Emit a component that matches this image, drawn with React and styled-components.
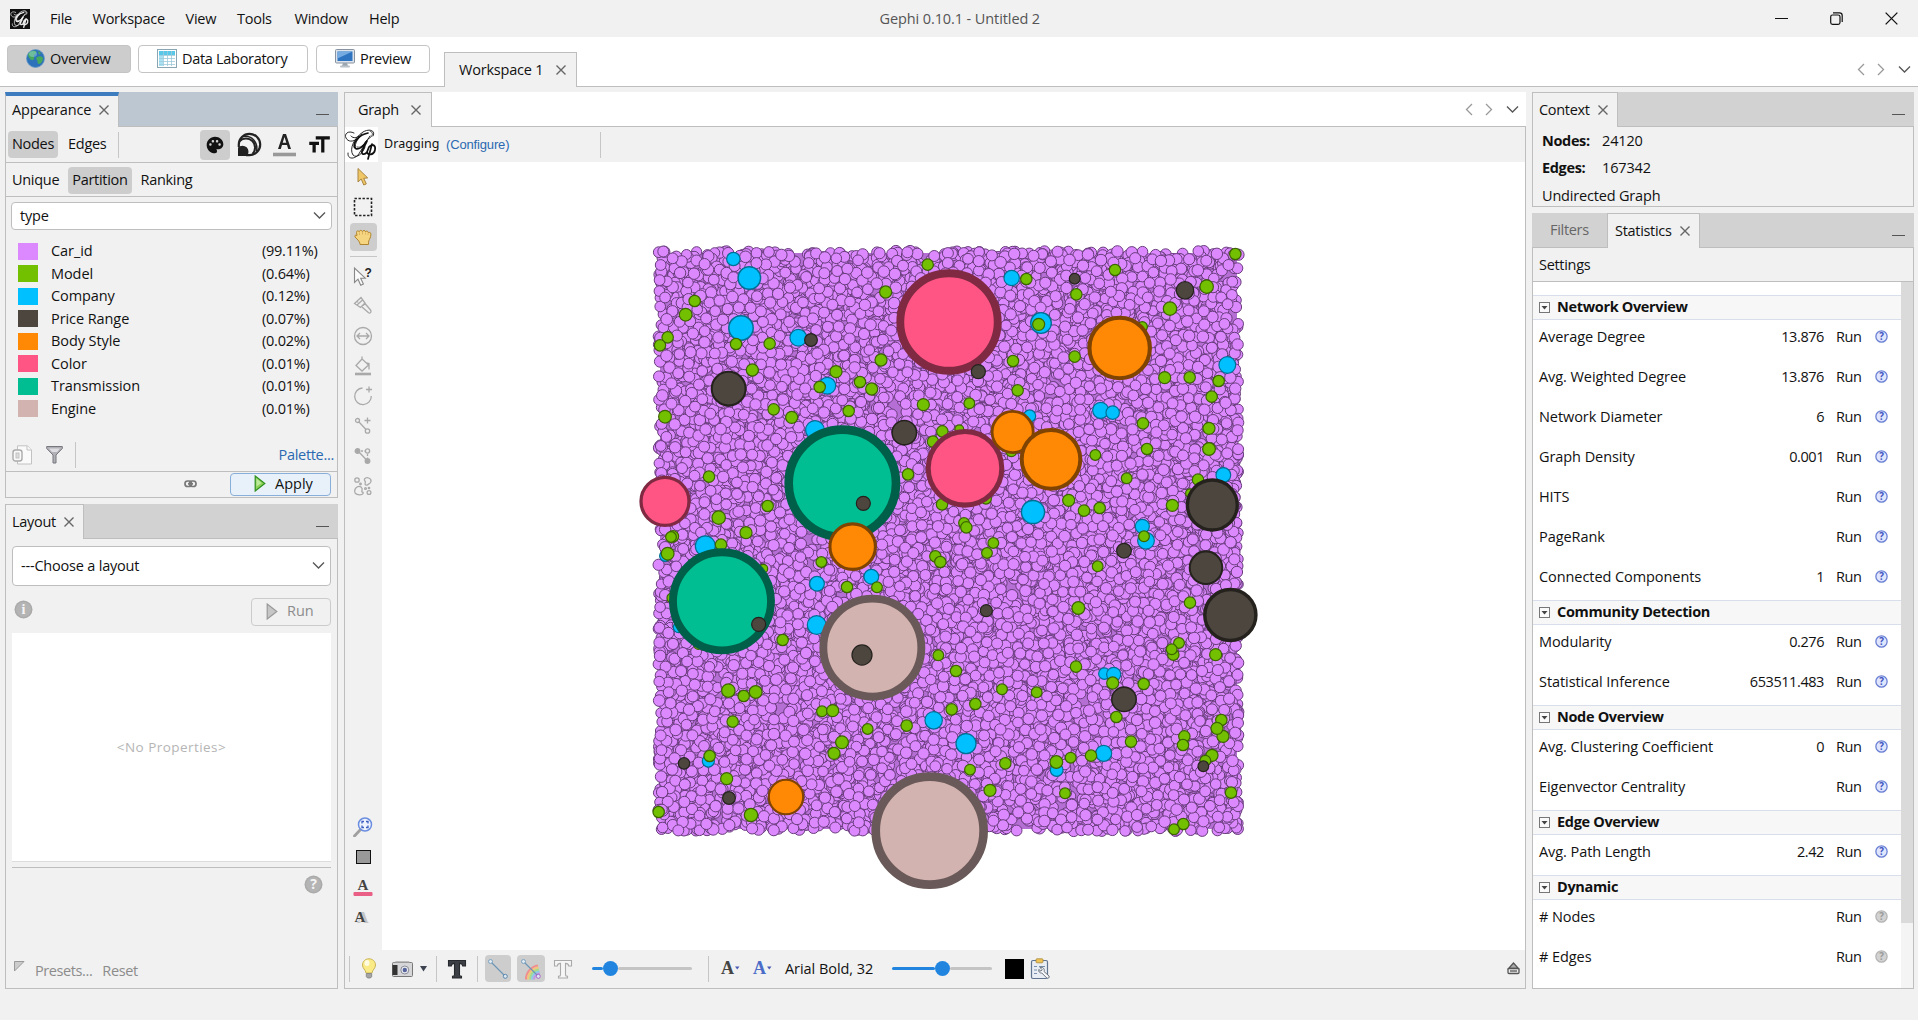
import React from "react";
import styled, { createGlobalStyle, css } from "styled-components";
import { MdPalette, MdFormatSize } from "react-icons/md";

const UI = `"Open Sans", "Noto Sans", sans-serif`;
const LINE = "#bebebe";
const BG = "#f1f1f1";

const Global = createGlobalStyle`
  * { box-sizing: border-box; }
  html, body { margin: 0; padding: 0; background: ${BG}; overflow: hidden; }
  body { font-family: ${UI}; font-size: 14.5px; letter-spacing: -0.3px; color: #111; line-height: 20px; }
  svg { display: block; flex: none; }
`;

const Window = styled.div`
  width: 1918px; height: 1020px; display: flex; flex-direction: column; background: ${BG}; overflow: hidden;
`;
const TitleBar = styled.header`
  height: 37px; display: grid; grid-template-columns: 1fr auto 1fr; align-items: center; flex: none;
`;
const Menu = styled.nav`
  display: flex; align-items: center; padding-left: 10px; height: 36px;
`;
const MenuItem = styled.span`
  width: ${(p) => p.$w}px; white-space: nowrap; letter-spacing: -0.25px;
`;
const AppIcon = styled.div`
  width: 20px; height: 20px; margin-right: 20px; background: #111;
`;
const WindowTitle = styled.div`
  color: #555; font-size: 14.5px; letter-spacing: -0.1px; white-space: nowrap; width: 159px;
`;
const WindowButtons = styled.div`
  display: flex; justify-content: flex-end; gap: 42px; align-items: center; padding-right: 20px;
`;
const TopStrip = styled.div`
  height: 50px; background: #fff; border-bottom: 1px solid ${LINE}; display: flex; padding-left: 7px; flex: none;
`;
const Perspective = styled.button`
  height: 28px; width: ${(p) => p.$w}px; margin: 8px ${(p) => p.$gap}px 0 0; padding: 0 0 1px ${(p) => p.$pad}px;
  display: flex; align-items: center; gap: 5px; border: 1px solid #c4c4c4; border-radius: 4px;
  background: ${(p) => (p.$on ? "#cdcdcd" : "#fff")}; font: inherit; letter-spacing: inherit; color: inherit; white-space: nowrap;
`;
const WorkspaceTab = styled.div`
  height: 35px; width: 133px; margin: 15px 0 0; border: 1px solid ${LINE}; border-bottom: 0; background: ${BG};
  display: flex; align-items: center; justify-content: space-between; padding: 0 10px 0 14px; white-space: nowrap; letter-spacing: -0.2px;
`;
const Arrows = styled.div`
  margin-left: auto; display: flex; align-items: center; gap: 11px; padding: ${(p) => p.$pad || "0"};
`;
const ArrowPair = styled.span`
  display: flex; gap: 6px;
`;
const Body = styled.main`
  flex: none; height: 897px; margin: 5px 5px 0 5px; display: flex; gap: 6px;
`;
const Column = styled.div`
  width: ${(p) => p.$w}px; display: flex; flex-direction: column; gap: 6px; flex: none;
`;
const Panel = styled.section`
  height: ${(p) => p.$h}px; display: flex; flex-direction: column; border: 1px solid ${LINE}; border-top: 0; flex: none; background: ${BG};
`;
const Tabs = styled.div`
  height: 35px; margin: 0 -1px; display: flex; flex: none; background: ${(p) => p.$bg || "#d2d2d2"};
  box-shadow: inset 0 -1px ${LINE};
`;
const Tab = styled.div`
  width: ${(p) => p.$w}px; display: flex; align-items: center; gap: ${(p) => p.$gap || 8}px; padding: 0 0 1px ${(p) => p.$pad || 7}px;
  white-space: nowrap; color: ${(p) => (p.$off ? "#666" : "#111")};
  ${(p) => !p.$off && css`
    background: ${BG}; border: 1px solid ${LINE}; border-bottom: 0;
  `}
  ${(p) => p.$focus && css`border-top: 4px solid #3d7dbf; padding-bottom: 3px; letter-spacing: -0.2px;`}
`;
const Minimise = styled.i`
  width: 13px; height: 1px; background: #555; margin: 22px 9px 0 auto;
`;
const ToolRow = styled.div`
  height: ${(p) => p.$h}px; display: flex; align-items: center; border-bottom: 1px solid ${LINE}; flex: none; padding: ${(p) => p.$pad};
  gap: ${(p) => p.$gap || 0}px;
`;
const Toggle = styled.span`
  height: 27px; padding: 0 4px; margin: ${(p) => p.$m || 0}; line-height: 26px; border-radius: 4px; white-space: nowrap;
  background: ${(p) => (p.$on ? "#cdcdcd" : "transparent")};
`;
const IconToggle = styled.span`
  width: ${(p) => p.$w || 30}px; height: ${(p) => p.$h || 30}px; border-radius: 4px; display: flex; align-items: center; justify-content: center;
  background: ${(p) => (p.$on ? "#cdcdcd" : "transparent")}; flex: none; margin: ${(p) => p.$m || 0};
`;
const VRule = styled.i`
  width: 1px; height: ${(p) => p.$h || 26}px; background: #c6c6c6; margin: ${(p) => p.$m || 0}; flex: none;
`;
const Push = styled.div`flex: 1;`;
const Select = styled.div`
  height: ${(p) => p.$h}px; margin: ${(p) => p.$m}; border: 1px solid ${LINE}; border-radius: 4px; background: #fff; flex: none;
  display: flex; align-items: center; justify-content: space-between; padding: 0 5px 1px 8px; letter-spacing: -0.2px;
`;
const Legend = styled.ul`
  list-style: none; margin: 10px 0 0; padding: 0; height: 198px; flex: none;
`;
const LegendRow = styled.li`
  height: 22.5px; display: grid; grid-template-columns: 20px 224px 1fr; align-items: center; padding-left: 12px; letter-spacing: -0.08px;
  & > b { width: 20px; height: 17px; background: ${(p) => p.$c}; }
  & > span { padding-left: 13px; line-height: 20px; }
  & > em { font-style: normal; letter-spacing: -0.25px; line-height: 20px; }
`;
const Button = styled.button`
  height: ${(p) => p.$h}px; width: ${(p) => p.$w}px; display: flex; align-items: center; gap: 9px; padding: 0 0 1px ${(p) => p.$pad}px;
  border: 1px solid ${(p) => (p.$main ? "#87afda" : "#cbcbcb")}; border-radius: 4px; background: ${(p) => (p.$main ? "#e8f1fa" : BG)};
  color: ${(p) => (p.$main ? "#111" : "#8c8c8c")}; font: inherit; letter-spacing: 0;
`;
const LinkText = styled.a`
  color: #2a69b2; white-space: nowrap; ${(p) => p.$arial && css`font: 13px "Liberation Sans", Arial, sans-serif; letter-spacing: -0.15px;`}
`;
const ApplyRow = styled.div`
  height: 27px; display: flex; align-items: center; justify-content: flex-end; gap: 33px; padding: 0 6px 1px 0;
`;
const RunRow = styled.div`
  height: 47px; display: flex; align-items: center; justify-content: space-between; padding: 4px 6px 0 8px; flex: none;
`;
const BadgeSlot = styled.div`margin-bottom: 4px;`;
const Properties = styled.div`
  height: 229px; margin: 0 6px; background: #fff; display: flex; align-items: center; justify-content: center; flex: none;
  color: #b5b5b5; font-size: 13.5px; letter-spacing: 0.45px; border-bottom: 1px solid #ddd;
`;
const HelpRow = styled.div`
  margin: 5px 6px 0; border-top: 1px solid ${LINE}; height: 94px; display: flex; justify-content: flex-end; padding: 7px 8px; flex: none;
`;
const Presets = styled.div`
  display: flex; gap: 10px; color: #8c8c8c; padding-left: 8px; letter-spacing: -0.4px;
`;
const Center = styled.section`
  width: 1182px; display: flex; flex-direction: column; border: 1px solid ${LINE}; border-top: 0; flex: none;
`;
const GraphBar = styled.div`
  height: 35px; display: flex; align-items: center; flex: none;
`;
const LogoBox = styled.div`
  width: 33px; height: 35px; background: #fff;
`;
const ModeText = styled.span`
  font: 12.5px "Noto Sans", sans-serif; letter-spacing: 0.05px; width: 57px; margin: -3px 5px 0 6px; white-space: nowrap;
`;
const ConfigureSlot = styled.span`width: 154px; display: flex;`;
const Workspace = styled.div`
  height: 788px; display: flex; flex: none;
`;
const SideTools = styled.div`
  width: 37px; display: flex; flex-direction: column; align-items: center; padding: 0 1px 20px 0; flex: none;
`;
const HRule = styled.i`
  width: 27px; height: 1px; background: #c6c6c6; margin: 4px 0 4px;
`;
const Canvas = styled.div`flex: 1; background: #fff;`;
const BottomBar = styled.div`
  height: 38px; display: flex; align-items: center; padding-left: 4px; padding-bottom: 1px;
`;
const Item = styled.div`
  width: ${(p) => p.$w}px; display: flex; align-items: center; justify-content: center; flex: none;
`;
const FontName = styled.span`
  width: 113px; padding-left: 6px; white-space: nowrap; letter-spacing: -0.05px;
`;
const Track = styled.div`
  width: 100px; height: 16px; display: flex; align-items: center; flex: none;
  & > i { height: 3px; border-radius: 2px; background: #c4c4c4; flex: 1; }
  & > i:first-child { background: #2185e0; flex: none; width: ${(p) => p.$v - 7}px; }
  & > b { width: 15px; height: 15px; border-radius: 50%; background: #2185e0; }
`;
const ColorChip = styled.div`width: 19px; height: 20px; background: #000;`;
const ContextBody = styled.dl`
  margin: 0; padding: 0 0 0 9px; display: grid; grid-template-columns: 60px 1fr; grid-auto-rows: 27.5px; align-items: center; letter-spacing: -0.15px;
  & dt { font-weight: 700; letter-spacing: -0.35px; } & dd { margin: 0; } & dt:last-child { font-weight: 400; grid-column: 1 / 3; letter-spacing: -0.18px; }
`;
const Scroll = styled.div`
  flex: 1; display: flex; background: #fff; overflow: hidden;
`;
const List = styled.div`flex: 1; padding-top: 13px;`;
const ScrollTrack = styled.div`
  width: 12px; background: #f4f4f4; & > i { display: block; height: 641px; background: #dadada; }
`;
const SectionHead = styled.h3`
  margin: 0; height: 25px; border: solid #d8deea; border-width: 1px 0 1px; background: #f7f7f8; display: flex; align-items: center; gap: 7px;
  padding: 0 0 1px 6px; font: inherit; font-weight: 700; letter-spacing: -0.33px;
`;
const StatRow = styled.div`
  height: 40px; display: grid; grid-template-columns: 1fr auto 37px 40px; align-items: center; padding: 0 0 7px 6px; white-space: nowrap;
  letter-spacing: -0.07px;
  & > span:nth-child(2) { letter-spacing: -0.42px; }
  & > span:nth-child(3) { padding-left: 12px; letter-spacing: -0.4px; }
  & > svg { margin-left: 14px; }
`;

const Cross = ({ s = 10, c = "#666", w = 1.4 }) => (
  <svg width={s} height={s} viewBox="0 0 10 10" stroke={c} strokeWidth={w} fill="none"><path d="M.5.5l9 9M9.5.5l-9 9" /></svg>
);
const Chevron = ({ dir = "down", c = "#555" }) => {
  const d = { down: "M1 3.5l5.5 5.5L12 3.5", left: "M9 1L3.5 6.5 9 12", right: "M4 1l5.5 5.5L4 12" }[dir];
  return <svg width="13" height="13" viewBox="0 0 13 13" stroke={c} strokeWidth="1.3" fill="none"><path d={d} /></svg>;
};
const NavArrows = ({ pad }) => (
  <Arrows $pad={pad}><ArrowPair><Chevron dir="left" c="#999" /><Chevron dir="right" c="#999" /></ArrowPair><Chevron /></Arrows>
);

const Logo = ({ size, h, color, sw = 1.3 }) => (
  <svg width={size} height={h} viewBox="0 0 33 35" fill="none" stroke={color} strokeLinecap="round">
    <g strokeWidth={sw * 0.7}>
      <path d="M9 6C3 3-1 7 1 11s7 4 11 1" />
      <path d="M28 9c3-5-3-8-10-4C9 11 4 22 8 28c4 4 10-2 12-8" />
      <path d="M3 26c-1 7 8 7 12-1 4-6 6-10 10-16" />
      <path d="M16 9c-5 4-7 10-5 13M6 9c2 3 7 2 11-2" />
    </g>
    <g strokeWidth={sw * 1.3}>
      <path d="M23 6C13 8 7 17 10 21c3 3 9-2 11-6" />
      <path d="M22 14l-5 10c-1 4 3 4 5 1l2-5c3-4 7-2 6 3s-7 6-8 2M27 17l-4 15" />
    </g>
    <path d="M25 4c4 1 3 6-2 8M12 20c4 1 6-1 10-7" strokeWidth={sw * 0.6} />
  </svg>
);
const Globe = () => (
  <svg width="19" height="19" viewBox="0 0 19 19">
    <circle cx="9.5" cy="9.5" r="9" fill="#2c72ba" stroke="#6b9bc8" strokeWidth=".8" />
    <path d="M2 5c2-3 5-4 8-3 1 2-1 3-2 4s1 2 0 4-3 1-4 0-2-3-2-5zM11 8c2-1 5-1 6 1 0 3-2 6-4 6s-1-3-2-4-1-2 0-3zM12 2l3 2-2 2z" fill="#45a85c" />
    <ellipse cx="7" cy="5" rx="4" ry="3" fill="#9fd8e8" opacity=".45" />
  </svg>
);
const TableIcon = () => (
  <svg width="20" height="19" viewBox="0 0 20 19">
    <rect x=".5" y=".5" width="19" height="18" fill="#fff" stroke="#8aa5b4" />
    <rect x="2" y="2" width="16" height="4" fill="#58c7e8" /><rect x="2" y="6" width="4" height="11" fill="#a9e2f3" />
    <path d="M2 6.500h16M2 9.500h16M2 12.500h16M2 15.500h16M6.500 2v15M10.500 2v15M14.500 2v15" stroke="#9cc9da" strokeWidth=".8" />
  </svg>
);
const Monitor = () => (
  <svg width="20" height="19" viewBox="0 0 20 19">
    <rect x=".5" y=".5" width="19" height="13.500" rx="1" fill="#dde3ea" stroke="#8793a0" />
    <rect x="2.500" y="2.500" width="15" height="9.500" fill="#2f74c0" /><path d="M2.500 2.500h15l-15 7z" fill="#76abe2" />
    <path d="M8 14h4l1 3H7z" fill="#9aa4ae" /><rect x="5" y="16.500" width="10" height="2" rx="1" fill="#b8c0c8" />
  </svg>
);
const RankSize = () => (
  <svg width="25" height="25" viewBox="0 0 25 25" fill="none" stroke="#222">
    <path d="M1.800 15V12.500A10.700 10.700 0 1 1 12.500 23.200H9" strokeWidth="2.200" />
    <path d="M2.500 9.200A8.600 8.600 0 0 1 15.500 22" strokeWidth="2.100" />
    <path d="M6 4.500c8-1.500 15.500 5 13.500 15" strokeWidth="1.500" />
    <path d="M1 15.500a5.500 5.500 0 1 1 8.800 8.500H1z" fill="#222" stroke="none" />
  </svg>
);
const FontColor = () => (
  <svg width="23" height="24" viewBox="0 0 23 24">
    <path d="M5 16L10 1h3l5 15h-2.800l-1.200-4H9l-1.200 4zM9.700 9.800h3.600L11.500 4z" fill="#222" />
    <path d="M0 21.500h23" stroke="#999" strokeWidth="3.600" />
  </svg>
);
const Play = ({ on }) => (
  <svg width="12" height="17" viewBox="0 0 12 17">
    <path d="M1.200 1v15l9.600-7.500z" fill={on ? "#8ed25a" : "#c6c6c6"} stroke={on ? "#2f8f1e" : "#9a9a9a"} strokeWidth="1.200" />
    {on && <path d="M2.500 3.500v8l5-3.500z" fill="#d2f2b8" opacity=".7" />}
  </svg>
);
const Badge = ({ t, bold }) => (
  <svg width="19" height="19" viewBox="0 0 19 19">
    <circle cx="9.500" cy="9.500" r="9" fill="#aaa" /><circle cx="9.500" cy="9.500" r="7.500" fill="#b4b4b4" />
    <text x="9.500" y="14.400" textAnchor="middle" fontFamily={bold ? "Liberation Serif" : "Open Sans"} fontWeight="700" fontSize="14" fill="#f4f4f4" letterSpacing="0">{t}</text>
  </svg>
);
const SmallHelp = ({ off }) => (
  <svg width="13" height="13" viewBox="0 0 12 12">
    <circle cx="6" cy="6" r="5.200" fill={off ? "#d2d2d2" : "#dfe5fc"} stroke={off ? "#b5b5b5" : "#6b80d4"} strokeWidth="1.200" />
    <text x="6" y="9.300" textAnchor="middle" fontFamily="Open Sans" fontWeight="700" fontSize="9" fill={off ? "#999" : "#3d55c0"} letterSpacing="0">?</text>
  </svg>
);
const Caret = () => (
  <svg width="11" height="11" viewBox="0 0 11 11"><rect x=".5" y=".5" width="10" height="10" fill="#fafafa" stroke="#777" /><path d="M2.500 4h6l-3 3.500z" fill="#444" /></svg>
);
const Letter = ({ fill = "#444", bar, shadow, arrow }) => (
  <svg width="22" height="22" viewBox="0 0 22 22" fontFamily="Liberation Serif" fontWeight="700" fontSize={bar ? 15 : 16} letterSpacing="0">
    {shadow && <text x="5" y="16.500" fill="#c4c4c4">A</text>}
    <text x={bar ? 5.500 : shadow ? 2.500 : 3} y={bar ? 13 : 15.500} fill={fill} fontSize={arrow ? 18 : shadow ? 15 : undefined}>A</text>
    {bar && <rect x="1.500" y="15" width="19" height="4" rx="1" fill="#ea5f86" />}
    {arrow && <path d="M17 8.500h4.500l-2.250 3z" fill="#4a5bb5" />}
  </svg>
);
const BigT = ({ outline }) => (
  <svg width="20" height="20" viewBox="0 0 20 20">
    <path d="M1.500 1.500h17v5.500h-2.800c-.2-2-.9-2.600-3.200-2.600v11.600c0 1 .5 1.300 2 1.300v1.700h-9v-1.700c1.500 0 2-.3 2-1.300V4.400C5.200 4.400 4.500 5 4.300 7H1.500z"
      fill={outline ? "#f6f6f6" : "#3c3f45"} stroke={outline ? "#aaa" : "#26292e"} strokeWidth="1.100" />
  </svg>
);

const svg20 = { width: 20, height: 20, viewBox: "0 0 20 20", fill: "none", stroke: "#a9a9a9", strokeWidth: 1.3 };
const Pointer = () => (
  <svg {...svg20}><path d="M5 1.500v13.500l3.200-3 2.600 6 2.500-1.100-2.600-5.600 4-.4z" fill="#efc766" stroke="#a98540" strokeWidth="1" /></svg>
);
const Marquee = () => <svg {...svg20}><rect x="1.500" y="1.500" width="17" height="17" stroke="#222" strokeWidth="1.600" strokeDasharray="2.400 1.600" /></svg>;
const Hand = () => (
  <svg {...svg20}><path d="M7 17.500c0-2-1-3-2-4.500L2 10c-.5-1.500.5-2.500 2-1.500L3.500 5.500c-.1-1.800 1.700-2.200 2.700-.7.300-1.800 2.700-2 3.200-.2.500-1.700 2.800-1.500 3.200.3.600-1.500 2.600-1 2.700.8 1-.9 2.700-.2 2.600 1.500 0 3-1.400 5-2.200 6.800l-.2 3.500z" fill="#f6d580" stroke="#b1852f" strokeWidth="1" />
    <path d="M6.500 8V5.500M9.500 7.500V5M12.500 7.500V5.500M15 8V6.500" stroke="#d5aa55" strokeWidth=".8" /></svg>
);
const Query = () => (
  <svg {...svg20}><path d="M1.500 2v14.500l3.500-3.300 2.700 6 2.700-1.300-2.700-5.700h4.600z" fill="#fafafa" stroke="#888" strokeWidth="1.100" />
    <text x="11.500" y="11" fontSize="12" fontWeight="700" fontFamily="Liberation Sans" fill="#222" stroke="none" letterSpacing="0">?</text></svg>
);
const Brush = () => <svg {...svg20}><path d="M1.500 7.500L8 1.500l4 5.500-4.500 4.500zM3.500 9.500l6-5.500M5 6.500l-1-1.500M10 9.500l2-2 5.500 6.500c1.500 2-.5 4-2.200 2.600L9 11" /></svg>;
const Resize = () => <svg {...svg20}><circle cx="10" cy="10" r="8.500" /><path d="M4.500 10h11M7 7l-3 3 3 3M13 7l3 3-3 3" /></svg>;
const Bucket = () => <svg {...svg20}><path d="M9 3L3 9.500l6 5.500 6.500-6L9 3V.5M12.500 6.500l3.500 1v6" /><path d="M2 18h16" strokeWidth="2.600" /></svg>;
const AddNode = () => <svg {...svg20}><path d="M9.500 2a8.300 8.300 0 1 0 8.800 8M16 .5v6M13 3.500h6" /></svg>;
const AddEdge = () => <svg {...svg20}><circle cx="4.500" cy="4.500" r="2" /><circle cx="14.500" cy="15" r="2.200" /><path d="M6 6l7 7.500M14.500 1.500v6M11.500 4.500h6" /></svg>;
const Path = () => (
  <svg {...svg20}><circle cx="4.500" cy="5" r="2.300" fill="#a9a9a9" /><circle cx="14.500" cy="15" r="2.300" fill="#a9a9a9" /><circle cx="14.500" cy="5" r="2.100" />
    <path d="M5 5l9.500 10" /><path d="M8 5h4M14.500 8v4" strokeDasharray="2 1.500" /></svg>
);
const Heat = () => (
  <svg {...svg20}><circle cx="4" cy="4" r="2.200" /><path d="M11.500 3c2-2.500 7-1 6.500 2.500-.4 2.500-3 2-3.500 3.500-1.500.5-3-.5-2.300-2C13.500 5 10.500 5 11.500 3zM4 11c3-2 6 1 5 3.500s2 1 1 3-6 1.500-7.500 0-1-5 1.500-6.500z" />
    <circle cx="16" cy="16.500" r="1.900" /><circle cx="7.500" cy="8" r=".8" /><circle cx="12.500" cy="12.500" r=".9" /><circle cx="16" cy="12" r=".7" /></svg>
);
const Magnifier = () => (
  <svg width="20" height="20" viewBox="0 0 20 20" fill="none"><path d="M8 12l-6.500 7" stroke="#a0a0a0" strokeWidth="2.800" strokeLinecap="round" />
    <circle cx="12" cy="7.500" r="6.500" fill="#eef3fe" stroke="#6b8ee0" strokeWidth="1.500" />
    <path d="M9 6.500v-2h2M13 4.500h2v2M15 8.500v2h-2M11 10.500H9v-2" stroke="#3c5fc0" strokeWidth="1.300" /></svg>
);
const Bulb = () => (
  <svg width="16" height="21" viewBox="0 0 16 21"><path d="M8 .8c-4 0-6.500 3-6.500 6.200 0 3.500 3 4.500 3.500 8h6c.5-3.500 3.500-4.500 3.500-8C14.500 3.800 12 .8 8 .8z" fill="#fbeb86" stroke="#c9b458" />
    <ellipse cx="6" cy="5" rx="2.500" ry="3" fill="#fffbe0" /><path d="M5.300 15.500h5.400v3L9.500 20h-3l-1.200-1.500z" fill="#a4a4a4" stroke="#777" strokeWidth=".7" /></svg>
);
const Camera = () => (
  <svg width="21" height="18" viewBox="0 0 21 18"><rect x=".5" y="2.500" width="20" height="14" rx="1" fill="#d6d6d8" stroke="#777" /><rect x=".5" y="5" width="5" height="10" fill="#333" />
    <path d="M2 2.500h16l-1-1.500H4z" fill="#bbb" /><circle cx="12.800" cy="10" r="4" fill="#e8eaf0" stroke="#8a8d98" /><circle cx="12.800" cy="10" r="2.200" fill="#56629a" /></svg>
);
const EdgeLine = ({ rainbow }) => (
  <svg width="22" height="22" viewBox="0 0 22 22" fill="none">
    {rainbow && ["#ef8f8f", "#f3c77a", "#a5dc8c", "#8bcbe6", "#c298e4"].map((c, i) => (
      <path key={c} d={`M${6 + i * 2} 21.500a${14 - i * 2} ${14 - i * 2} 0 0 1 ${12 - i * 1.500} ${-14 + i * 2}`} stroke={c} strokeWidth="2" />
    ))}
    <path d="M4 4l14 14" stroke="#6b94b6" strokeWidth="1.100" />
    <circle cx="3.500" cy="3.500" r="2" fill="#dfe9f1" stroke="#7fa2bf" /><circle cx="18.300" cy="18.300" r="2" fill="#dfe9f1" stroke={rainbow ? "#a569c8" : "#5b87ac"} />
  </svg>
);
const Clipboard = () => (
  <svg width="21" height="22" viewBox="0 0 21 22"><rect x="1.500" y="2.500" width="16" height="18" rx="1.500" fill="#e9eef5" stroke="#5e748f" strokeWidth="1.200" />
    <rect x="6" y=".8" width="7" height="4" rx="1" fill="#f0c556" stroke="#a8873a" strokeWidth=".8" /><path d="M4 8.500h3M4 12h3M4 15.500h3M9 8.500h6" stroke="#7890ab" />
    <path d="M10 9.500c3-.8 5 1.500 4 4l5 4.500c1 1.500-1 3-2.200 2l-5-5c-2 .4-3.600-1.600-3-3.500l2.200 1.700 1.300-1.400z" fill="#f8f9fb" stroke="#5e6670" strokeWidth=".9" /></svg>
);
const Eject = () => (
  <svg width="13" height="13" viewBox="0 0 13 13" fill="none" stroke="#555" strokeWidth="1.300"><path d="M6.500 1L1.500 6.500h10z" fill="#aaa" /><rect x="1" y="6.500" width="11" height="5" rx="1" fill="#eee" /><path d="M3 9h7" /></svg>
);
const Sheet = () => (
  <svg width="21" height="20" viewBox="0 0 21 20" fill="#fafafa" stroke="#c2c2c2"><path d="M5.500.8h10L19.500 5v14h-14z" /><path d="M15 .8V5h4.500" /><rect x="1" y="5" width="9" height="11" rx="2.500" stroke="#aaa" strokeWidth="1.400" /><rect x="4" y="8" width="3" height="5" fill="#ddd" /></svg>
);
const Funnel = () => (
  <svg width="17" height="19" viewBox="0 0 17 19"><path d="M.7 1.500h15.600v2L10 10v8H7v-8L.7 3.500z" fill="#b0b0b6" stroke="#77777e" /><path d="M3 3.500h11l-3 3.500H6z" fill="#dedee2" /></svg>
);
const Link = () => (
  <svg width="13" height="8" viewBox="0 0 13 8" fill="none" stroke="#777" strokeWidth="1.700"><rect x="1" y="1" width="6.500" height="5.500" rx="2.600" /><rect x="5.500" y="1" width="6.500" height="5.500" rx="2.600" /><path d="M4 3.800h5" /></svg>
);

/* Graph nodes: fill and border per partition value */
const STYLE = {
  company: ["#00c0ff", "#006f94"],
  model: ["#73c000", "#3c6400"],
  color: ["#ff5584", "#7f2a42"],
  transmission: ["#00be92", "#005f49"],
  engine: ["#d3b3b0", "#695958"],
  body: ["#ff8805", "#7f4402"],
  price: ["#4c463e", "#25221e"],
};
/* Each tile lists its nodes as x, y, r in thirds of a pixel from the tile's origin */
const TILES = [
  { x: 640, y: 230,
    company: [[280,87,21],[328,144,35],[303,294,38],[475,323,26],[562,467,26],[525,600,29],[196,948,31],[75,978,17]],
    model: [[164,213,18],[137,254,20],[83,322,18],[60,346,18],[288,342,18],[389,341,18],[337,420,19],[588,425,19],[539,471,18],[660,456,18],[695,477,19],[723,390,19],[737,186,19],[863,104,18],[401,538,18],[455,562,19],[626,543,18],[850,524,19],[907,604,18],[879,635,18],[75,560,20],[207,740,18],[804,733,18],[906,823,18],[383,828,18],[236,863,21],[318,908,19],[99,919,18],[93,921,17],[83,971,20],[243,944,18],[544,996,17],[886,979,18],[901,996,18],[958,598,14],[370,1016,14]],
    price: [[513,330,20],[266,476,53],[793,608,38],[670,820,22]],
    color: [[927,276,157],[75,814,76]],
    transmission: [[607,760,173]],
    body: [[638,950,72]] },
  { x: 960, y: 230,
    company: [[155,144,24],[243,279,32],[802,405,26],[422,541,25],[458,548,21],[209,558,19],[219,846,36],[790,735,23],[547,889,22],[558,932,26]],
    model: [[199,147,18],[465,120,18],[349,193,18],[740,170,21],[826,72,18],[630,236,21],[236,283,19],[547,290,16],[159,393,18],[344,380,18],[173,481,18],[28,520,17],[614,443,19],[689,442,18],[776,453,18],[755,500,18],[549,580,18],[747,595,19],[747,657,20],[561,657,18],[406,675,17],[500,745,17],[714,749,18],[690,790,14],[326,811,19],[372,842,18],[419,834,18],[637,826,19],[12,879,17],[19,892,18],[100,939,17],[81,969,17],[552,919,17],[413,1009,17],[154,664,17],[78,806,17]],
    price: [[344,146,17],[675,181,27],[55,425,22],[757,825,79],[492,962,23],[738,1013,51]],
    color: [[15,715,117]],
    body: [[479,354,96],[158,606,65],[273,688,93]] },
  { x: 640, y: 560,
    company: [[531,71,23],[694,50,23],[530,195,29],[881,481,27],[205,603,19],[116,202,17]],
    model: [[621,81,18],[711,82,17],[428,240,18],[895,286,17],[948,333,18],[265,392,21],[311,408,18],[347,396,20],[546,454,17],[578,452,19],[278,485,18],[683,507,17],[800,497,18],[935,448,18],[606,547,20],[582,580,19],[209,588,18],[260,656,19],[56,756,18],[333,765,21],[96,114,16],[175,255,14]],
    price: [[356,193,22],[666,285,31],[132,610,18],[267,714,20]],
    transmission: [[246,124,158]],
    engine: [[697,263,158],[869,812,174]],
    body: [[438,711,54]] },
  { x: 960, y: 560,
    company: [[18,551,31],[433,341,18],[461,343,22],[431,580,25],[290,630,20]],
    model: [[355,144,20],[690,128,18],[657,249,17],[640,284,18],[635,268,17],[767,284,19],[348,320,18],[458,369,19],[551,372,18],[469,471,18],[126,388,17],[230,397,17],[46,432,18],[784,480,18],[789,529,19],[771,505,19],[673,529,18],[669,555,18],[513,545,18],[756,586,19],[736,602,17],[289,606,20],[332,593,17],[393,587,18],[136,610,18],[30,629,17],[90,691,19],[315,700,17],[813,698,18],[670,792,18],[642,808,17]],
    price: [[79,152,19],[811,165,81],[492,418,38],[730,619,17]] },
];
const LAYERS = ["company", "model", "transmission", "engine", "color", "body", "price"];

const random = (seed) => () => {
  seed = (seed + 0x6d2b79f5) | 0;
  let t = Math.imul(seed ^ (seed >>> 15), 1 | seed);
  t = (t + Math.imul(t ^ (t >>> 7), 61 | t)) ^ t;
  return ((t ^ (t >>> 14)) >>> 0) / 4294967296;
};
const buildField = () => {
  const rnd = random(24120);
  const x0 = 658.5, y0 = 251, w = 580, h = 580;
  const pts = [];
  for (let i = 0; i < 10000; i++) pts.push([x0 + rnd() * w, y0 + rnd() * h, 5 + rnd() * 0.7]);
  const cell = 11, cols = 60, grid = new Map();
  for (let i = 0; i < 9000; i++) {
    const x = rnd() * w, y = rnd() * h, gx = Math.floor(x / cell), gy = Math.floor(y / cell);
    const min = 35 + rnd() * 80;
    let ok = true;
    for (let a = -1; a <= 1 && ok; a++)
      for (let b = -1; b <= 1 && ok; b++)
        for (const q of grid.get((gy + b) * cols + gx + a) || [])
          if ((q[0] - x) ** 2 + (q[1] - y) ** 2 < min) { ok = false; break; }
    if (!ok) continue;
    const k = gy * cols + gx;
    grid.set(k, [...(grid.get(k) || []), [x, y]]);
    pts.push([x0 + x, y0 + y, 5.300 + rnd() * 0.5]);
  }
  return pts;
};
const FIELD = buildField();

const ringWidth = (r) => {
  if (r > 140) return r * 0.05;
  if (r > 60) return r * 0.043;
  return Math.max(1.2, r * 0.04);
};

const Graph = () => (
  <svg width="1143" height="788" viewBox="382 162 1143 788">
    <rect x="660" y="253" width="577" height="576" fill="#b56fd4" />
    <g fill="#dc89ff" stroke="#683c7b" strokeWidth="1">
      {FIELD.map((p, i) => <circle key={i} cx={p[0].toFixed(1)} cy={p[1].toFixed(1)} r={p[2].toFixed(1)} />)}
    </g>
    {LAYERS.map((kind) => (
      <g key={kind} fill={STYLE[kind][0]} stroke={STYLE[kind][1]}>
        {TILES.flatMap((t) => (t[kind] || []).map(([x, y, r]) => {
          const sw = ringWidth(r);
          return <circle key={`${t.x}-${t.y}-${x}-${y}`} cx={t.x + x / 3} cy={t.y + y / 3} r={r / 3 - sw / 2 + 0.3} strokeWidth={sw} />;
        }))}
      </g>
    ))}
  </svg>
);

const LEGEND = [
  ["Car_id", "99.11", "#dc89ff"], ["Model", "0.64", "#73c000"], ["Company", "0.12", "#00c0ff"], ["Price Range", "0.07", "#4c463e"],
  ["Body Style", "0.02", "#ff8805"], ["Color", "0.01", "#ff5584"], ["Transmission", "0.01", "#00be92"], ["Engine", "0.01", "#d3b3b0"],
];
const STATS = [
  ["Network Overview", [["Average Degree", "13.876"], ["Avg. Weighted Degree", "13.876"], ["Network Diameter", "6"], ["Graph Density", "0.001"], ["HITS", ""], ["PageRank", ""], ["Connected Components", "1"]]],
  ["Community Detection", [["Modularity", "0.276"], ["Statistical Inference", "653511.483"]]],
  ["Node Overview", [["Avg. Clustering Coefficient", "0"], ["Eigenvector Centrality", ""]]],
  ["Edge Overview", [["Avg. Path Length", "2.42"]]],
  ["Dynamic", [["# Nodes", ""], ["# Edges", ""]]],
];

const Appearance = () => (
  <Panel $h={406}>
    <Tabs $bg="#bcc7d1"><Tab $w={114} $focus $pad={6}>Appearance <Cross /></Tab><Minimise /></Tabs>
    <ToolRow $h={36} $pad="0 3px 0 2px">
      <Toggle $on>Nodes</Toggle><Toggle $m="0 0 0 6px">Edges</Toggle><VRule $m="0 0 0 8px" />
      <Push />
      <IconToggle $on><MdPalette size={20} color="#111" /></IconToggle>
      <IconToggle $m="0 0 0 4px"><RankSize /></IconToggle>
      <IconToggle $m="0 0 0 5px"><FontColor /></IconToggle>
      <IconToggle $m="0 0 0 5px"><MdFormatSize size={26} color="#111" /></IconToggle>
    </ToolRow>
    <ToolRow $h={34} $pad="1px 2px 0 2px" $gap={5}><Toggle>Unique</Toggle><Toggle $on>Partition</Toggle><Toggle>Ranking</Toggle></ToolRow>
    <Select $h={28} $m="5px 5px 0">type <Chevron /></Select>
    <Legend>
      {LEGEND.map(([n, v, c]) => <LegendRow key={n} $c={c}><b /><span>{n}</span><em>({v}%)</em></LegendRow>)}
    </Legend>
    <ToolRow $h={34} $pad="0 3px 0 6px"><Sheet /><Item $w={42}><Funnel /></Item><VRule /><Push /><LinkText>Palette...</LinkText></ToolRow>
    <ApplyRow><Link /><Button $main $h={23} $w={101} $pad={23}><Play on />Apply</Button></ApplyRow>
  </Panel>
);

const LayoutPanel = () => (
  <Panel $h={485}>
    <Tabs><Tab $w={79} $pad={6}>Layout <Cross /></Tab><Minimise /></Tabs>
    <Select $h={40} $m="7px 6px 0">---Choose a layout <Chevron /></Select>
    <RunRow><BadgeSlot><Badge t="i" bold /></BadgeSlot><Button $h={28} $w={80} $pad={14}><Play />Run</Button></RunRow>
    <Properties>&lt;No Properties&gt;</Properties>
    <HelpRow><Badge t="?" /></HelpRow>
    <Presets><svg width="11" height="11" viewBox="0 0 11 11"><path d="M.5.5h9.500l-9.500 9.500z" fill="#ccc" stroke="#999" /></svg><span>Presets...</span><span>Reset</span></Presets>
  </Panel>
);

const Statistics = () => (
  <Panel $h={776}>
    <Tabs><Tab $w={75} $off $pad={18}>Filters</Tab><Tab $w={93} $pad={7}>Statistics <Cross /></Tab><Minimise /></Tabs>
    <ToolRow $h={34} $pad="0 6px">Settings</ToolRow>
    <Scroll>
      <List>
        {STATS.map(([title, rows]) => (
          <React.Fragment key={title}>
            <SectionHead><Caret />{title}</SectionHead>
            {rows.map(([n, v]) => <StatRow key={n}><span>{n}</span><span>{v}</span><span>Run</span><SmallHelp off={title === "Dynamic"} /></StatRow>)}
          </React.Fragment>
        ))}
      </List>
      <ScrollTrack><i /></ScrollTrack>
    </Scroll>
  </Panel>
);

export default function App() {
  return (
    <Window>
      <Global />
      <TitleBar>
        <Menu>
          <AppIcon><Logo size={20} h={20} color="#eee" sw={1.800} /></AppIcon>
          <MenuItem $w={42.500}>File</MenuItem><MenuItem $w={93}>Workspace</MenuItem><MenuItem $w={51.500}>View</MenuItem>
          <MenuItem $w={57.500}>Tools</MenuItem><MenuItem $w={74.500}>Window</MenuItem><MenuItem $w={40}>Help</MenuItem>
        </Menu>
        <WindowTitle>Gephi 0.10.1 - Untitled 2</WindowTitle>
        <WindowButtons>
          <svg width="13" height="13" viewBox="0 0 13 13"><path d="M0 6.500h13" stroke="#111" /></svg>
          <svg width="13" height="13" viewBox="0 0 13 13" fill="none" stroke="#111" strokeWidth="1.200"><rect x=".7" y="3" width="9.300" height="9.300" rx="1.800" /><path d="M3 .8h6.500a2.700 2.700 0 0 1 2.700 2.700V10" /></svg>
          <Cross s={13} c="#111" w={1} />
        </WindowButtons>
      </TitleBar>
      <TopStrip>
        <Perspective $w={124} $gap={7} $on $pad={18}><Globe />Overview</Perspective>
        <Perspective $w={170} $gap={8} $pad={18}><TableIcon />Data Laboratory</Perspective>
        <Perspective $w={114} $gap={14} $pad={18}><Monitor />Preview</Perspective>
        <WorkspaceTab>Workspace 1 <Cross /></WorkspaceTab>
        <NavArrows pad="16px 7px 0 0" />
      </TopStrip>
      <Body>
        <Column $w={333}><Appearance /><LayoutPanel /></Column>
        <Center>
          <Tabs $bg="#fff"><Tab $w={88} $pad={13} $gap={12}>Graph <Cross /></Tab><NavArrows pad="0 7px 0 0" /></Tabs>
          <GraphBar>
            <LogoBox><Logo size={33} h={35} color="#111" /></LogoBox>
            <ModeText>Dragging</ModeText><ConfigureSlot><LinkText $arial>(Configure)</LinkText></ConfigureSlot><VRule />
          </GraphBar>
          <Workspace>
            <SideTools>
              <IconToggle $w={27} $h={30}><Pointer /></IconToggle>
              <IconToggle $w={27} $h={30}><Marquee /></IconToggle>
              <IconToggle $w={27} $h={28} $on $m="1px 0"><Hand /></IconToggle>
              <HRule />
              {[Query, Brush, Resize, Bucket, AddNode, AddEdge, Path, Heat].map((I, i) => <IconToggle key={i} $w={27} $h={30}><I /></IconToggle>)}
              <Push />
              <IconToggle $w={27} $h={30}><Magnifier /></IconToggle>
              <IconToggle $w={27} $h={30}><svg width="15" height="14" viewBox="0 0 15 14"><rect x=".5" y=".5" width="14" height="13" fill="#999" stroke="#111" /></svg></IconToggle>
              <IconToggle $w={27} $h={32}><Letter bar /></IconToggle>
              <IconToggle $w={27} $h={26}><Letter shadow /></IconToggle>
            </SideTools>
            <Canvas><Graph /></Canvas>
          </Workspace>
          <BottomBar>
            <VRule /><Item $w={38}><Bulb /></Item><Item $w={28}><Camera /></Item>
            <Item $w={14}><svg width="7" height="6" viewBox="0 0 7 6"><path d="M0 0h7L3.500 5.500z" fill="#3d4350" /></svg></Item>
            <VRule $m="0 0 0 6px" /><Item $w={40}><BigT /></Item><VRule $m="0 7px 0 0" />
            <IconToggle $on $w={26} $h={27}><EdgeLine /></IconToggle><IconToggle $on $w={28} $h={27} $m="0 0 0 6px"><EdgeLine rainbow /></IconToggle>
            <Item $w={36}><BigT outline /></Item><Item $w={11} />
            <Track $v={18}><i /><b /><i /></Track><VRule $m="0 6px 0 16px" />
            <Item $w={27}><Letter arrow /></Item><Item $w={37}><Letter arrow fill="#4a6cc8" /></Item>
            <FontName>Arial Bold, 32</FontName>
            <Track $v={50}><i /><b /><i /></Track><Item $w={13} /><ColorChip /><Item $w={32}><Clipboard /></Item>
            <Push /><Item $w={24}><Eject /></Item>
          </BottomBar>
        </Center>
        <Column $w={382}>
          <Panel $h={115}>
            <Tabs><Tab $w={86} $pad={6}>Context <Cross /></Tab><Minimise /></Tabs>
            <ContextBody><dt>Nodes:</dt><dd>24120</dd><dt>Edges:</dt><dd>167342</dd><dt>Undirected Graph</dt></ContextBody>
          </Panel>
          <Statistics />
        </Column>
      </Body>
    </Window>
  );
}
